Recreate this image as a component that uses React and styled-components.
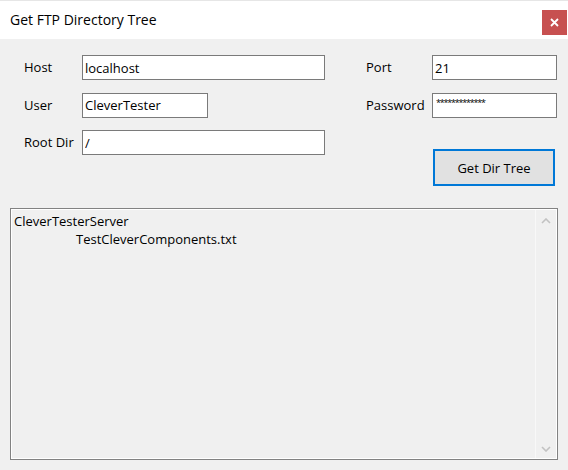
import React from 'react'
import styled, { createGlobalStyle } from 'styled-components'

const GlobalStyle = createGlobalStyle`
  html, body {
    margin: 0;
    padding: 0;
    background: #f0f0f0;
  }
  body {
    font-family: "Open Sans", "Liberation Sans", sans-serif;
    font-size: 13px;
    color: #000;
  }
`;

const Window = styled.div`
  width: 568px;
  height: 470px;
  background: #f0f0f0;
  display: flex;
  flex-direction: column;
  overflow: hidden;
`;

const TitleBar = styled.div`
  height: 39px;
  background: #fff;
  border-top: 1px solid #e6e6e6;
  box-sizing: border-box;
  display: flex;
  align-items: center;
  justify-content: space-between;
  padding-left: 10px;
`;

const Title = styled.div`
  font-size: 14px;
  margin-top: -2px;
`;

const CloseButton = styled.div`
  width: 25px;
  height: 25px;
  margin-right: 1px;
  margin-top: 5px;
  background: #c75050;
  display: flex;
  align-items: center;
  justify-content: center;
`;

const Form = styled.div`
  display: flex;
  padding: 16px 0 0 24px;
  gap: 41px;
`;

const FieldGrid = styled.div`
  display: grid;
  grid-template-columns: ${p => p.labelWidth}px auto;
  grid-auto-rows: 25px;
  row-gap: 12.5px;
  align-items: center;
`;

const Label = styled.label`
  white-space: nowrap;
  margin-top: -1px;
`;

const Input = styled.input`
  box-sizing: border-box;
  width: ${p => p.width}px;
  height: 25px;
  border: 1px solid #7a7a7a;
  background: #fff;
  font-family: inherit;
  font-size: 13px;
  padding: 0 2px;
  color: #000;
  outline: none;
`;

const MaskedInput = styled(Input)`
  font-size: 9px;
  letter-spacing: -1.2px;
  padding: 0 2px 6px 3px;
`;

const ButtonCell = styled.div`
  grid-column: 2;
  grid-row: 3;
  align-self: start;
  padding: 19px 0 0 1px;
`;

const Button = styled.button`
  box-sizing: border-box;
  width: 122px;
  height: 37px;
  background: #e1e1e1;
  border: 2px solid #0078d7;
  font-family: inherit;
  font-size: 13px;
  color: #000;
  padding: 0;
`;

const Tree = styled.div`
  box-sizing: border-box;
  margin: 52.5px 0 0 10px;
  width: 548px;
  height: 252px;
  border: 1px solid #828282;
  box-shadow: inset 1px 1px 0 #fff, inset -1px -1px 0 #fff;
  display: flex;
`;

const TreeBody = styled.div`
  flex: 1;
  padding: 3px 3px;
  line-height: 18px;
`;

const TreeLine = styled.div`
  padding-left: ${p => p.level * 62}px;
`;

const ScrollBar = styled.div`
  width: 20px;
  margin: 1px 1px 1px 0;
  border-left: 1px solid #f8f8f8;
  display: flex;
  flex-direction: column;
  justify-content: space-between;
  align-items: center;
  padding: 8px 0 6px;
`;

function Chevron({ down }) {
  return (
    <svg width="10" height="6" viewBox="0 0 10 6">
      <path
        d={down ? 'M1 1 L5 5 L9 1' : 'M1 5 L5 1 L9 5'}
        fill="none"
        stroke="#c2c2c2"
        strokeWidth="1.6"
      />
    </svg>
  )
}

function App() {
  return (
    <Window>
      <GlobalStyle />
      <TitleBar>
        <Title>Get FTP Directory Tree</Title>
        <CloseButton>
          <svg width="9" height="9" viewBox="0 0 9 9">
            <path d="M1 1 L8 8 M8 1 L1 8" stroke="#fff" strokeWidth="1.8" />
          </svg>
        </CloseButton>
      </TitleBar>

      <Form>
        <FieldGrid labelWidth={58}>
          <Label>Host</Label>
          <Input width={243} defaultValue="localhost" />
          <Label>User</Label>
          <Input width={126} defaultValue="CleverTester" />
          <Label>Root Dir</Label>
          <Input width={243} defaultValue="/" />
        </FieldGrid>

        <FieldGrid labelWidth={66}>
          <Label>Port</Label>
          <Input width={125} defaultValue="21" />
          <Label>Password</Label>
          <MaskedInput width={125} defaultValue="*************" />
          <ButtonCell>
            <Button>Get Dir Tree</Button>
          </ButtonCell>
        </FieldGrid>
      </Form>

      <Tree>
        <TreeBody>
          <TreeLine level={0}>CleverTesterServer</TreeLine>
          <TreeLine level={1}>TestCleverComponents.txt</TreeLine>
        </TreeBody>
        <ScrollBar>
          <Chevron />
          <Chevron down />
        </ScrollBar>
      </Tree>
    </Window>
  )
}

export default App
